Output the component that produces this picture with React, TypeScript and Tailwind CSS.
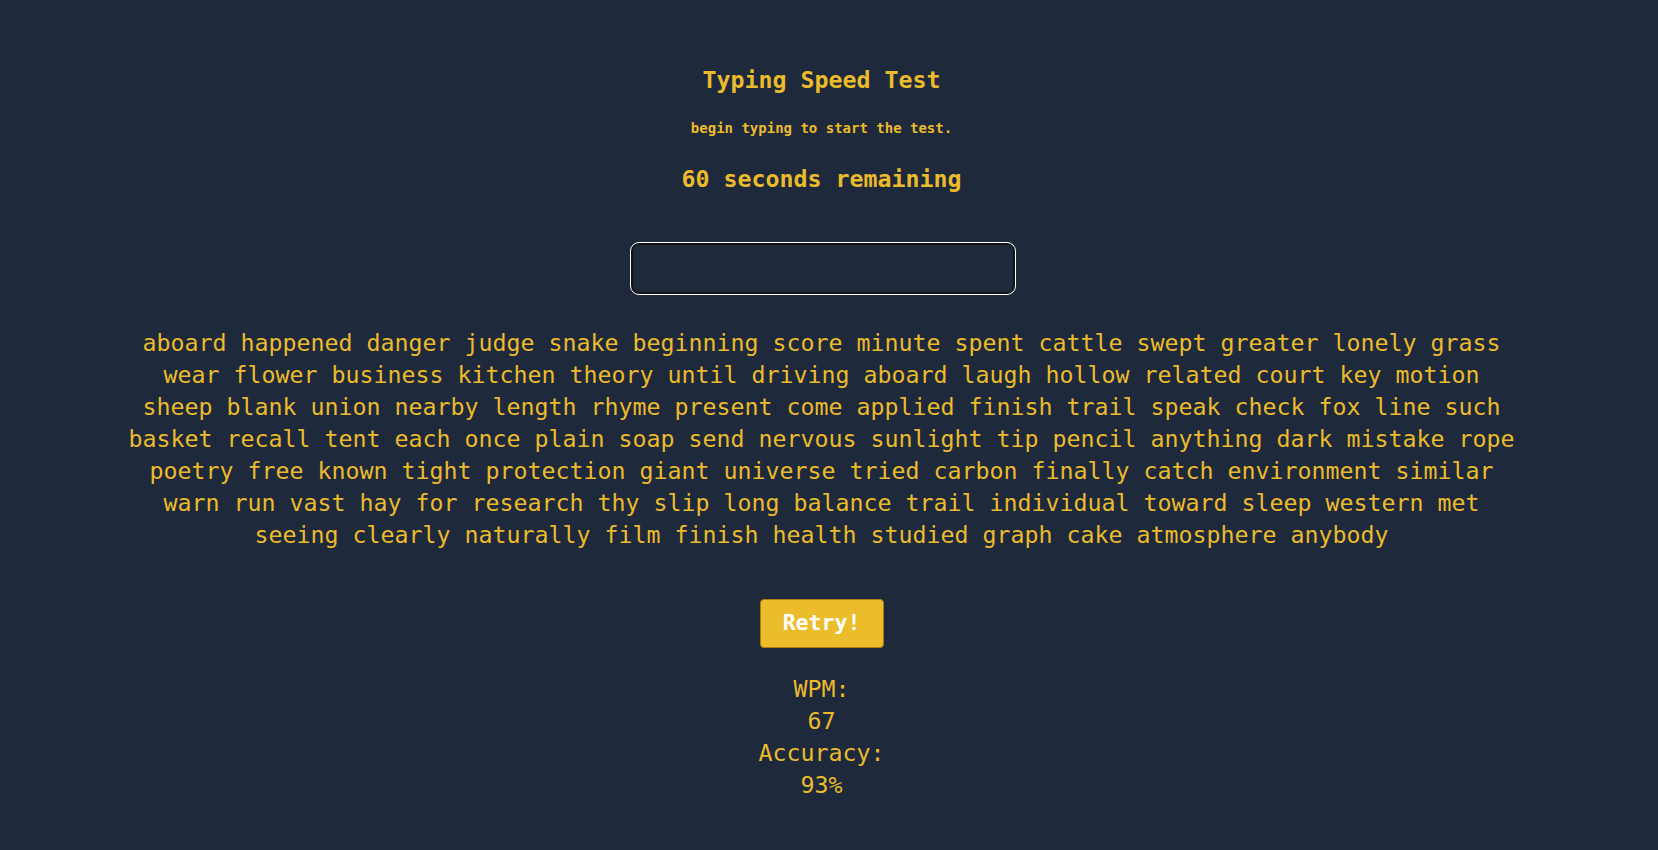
import React from "react";

const words = [
  "aboard happened danger judge snake beginning score minute spent cattle swept greater lonely grass",
  "wear flower business kitchen theory until driving aboard laugh hollow related court key motion",
  "sheep blank union nearby length rhyme present come applied finish trail speak check fox line such",
  "basket recall tent each once plain soap send nervous sunlight tip pencil anything dark mistake rope",
  "poetry free known tight protection giant universe tried carbon finally catch environment similar",
  "warn run vast hay for research thy slip long balance trail individual toward sleep western met",
  "seeing clearly naturally film finish health studied graph cake atmosphere anybody",
].join(" ");

export default function App() {
  const mono = { fontFamily: '"DejaVu Sans Mono", "Liberation Mono", monospace' };
  return (
    <div
      className="min-h-screen w-full bg-[#1e293b] text-[#ebbb2b] pr-[15px] pb-[40px]"
      style={mono}
    >
      <div className="flex flex-col items-center">
        <h1 className="pt-[64px] text-[23.25px] leading-[32px] font-bold">Typing Speed Test</h1>
        <p className="mt-[22px] text-[14px] leading-[20px] font-bold">begin typing to start the test.</p>
        <p className="mt-[25px] text-[23.25px] leading-[32px] font-bold">60 seconds remaining</p>
        <input
          type="text"
          className="mt-[48px] ml-[2px] h-[51px] w-[384px] rounded-lg border-2 border-[#111318] bg-transparent outline outline-1 outline-white"
          style={mono}
        />
        <p className="mt-[33px] w-[1393px] text-center text-[23.25px] leading-[32px]">{words}</p>
        <button
          className="mt-[48px] h-[49px] w-[124px] rounded-[4px] border border-[#b07c12] bg-[#ecbd2a] text-[21.5px] font-bold text-white"
          style={mono}
        >
          Retry!
        </button>
        <div className="mt-[25px] flex flex-col items-center text-[23.25px] leading-[32px]">
          <span>WPM:</span>
          <span>67</span>
          <span>Accuracy:</span>
          <span>93%</span>
        </div>
      </div>
    </div>
  );
}
